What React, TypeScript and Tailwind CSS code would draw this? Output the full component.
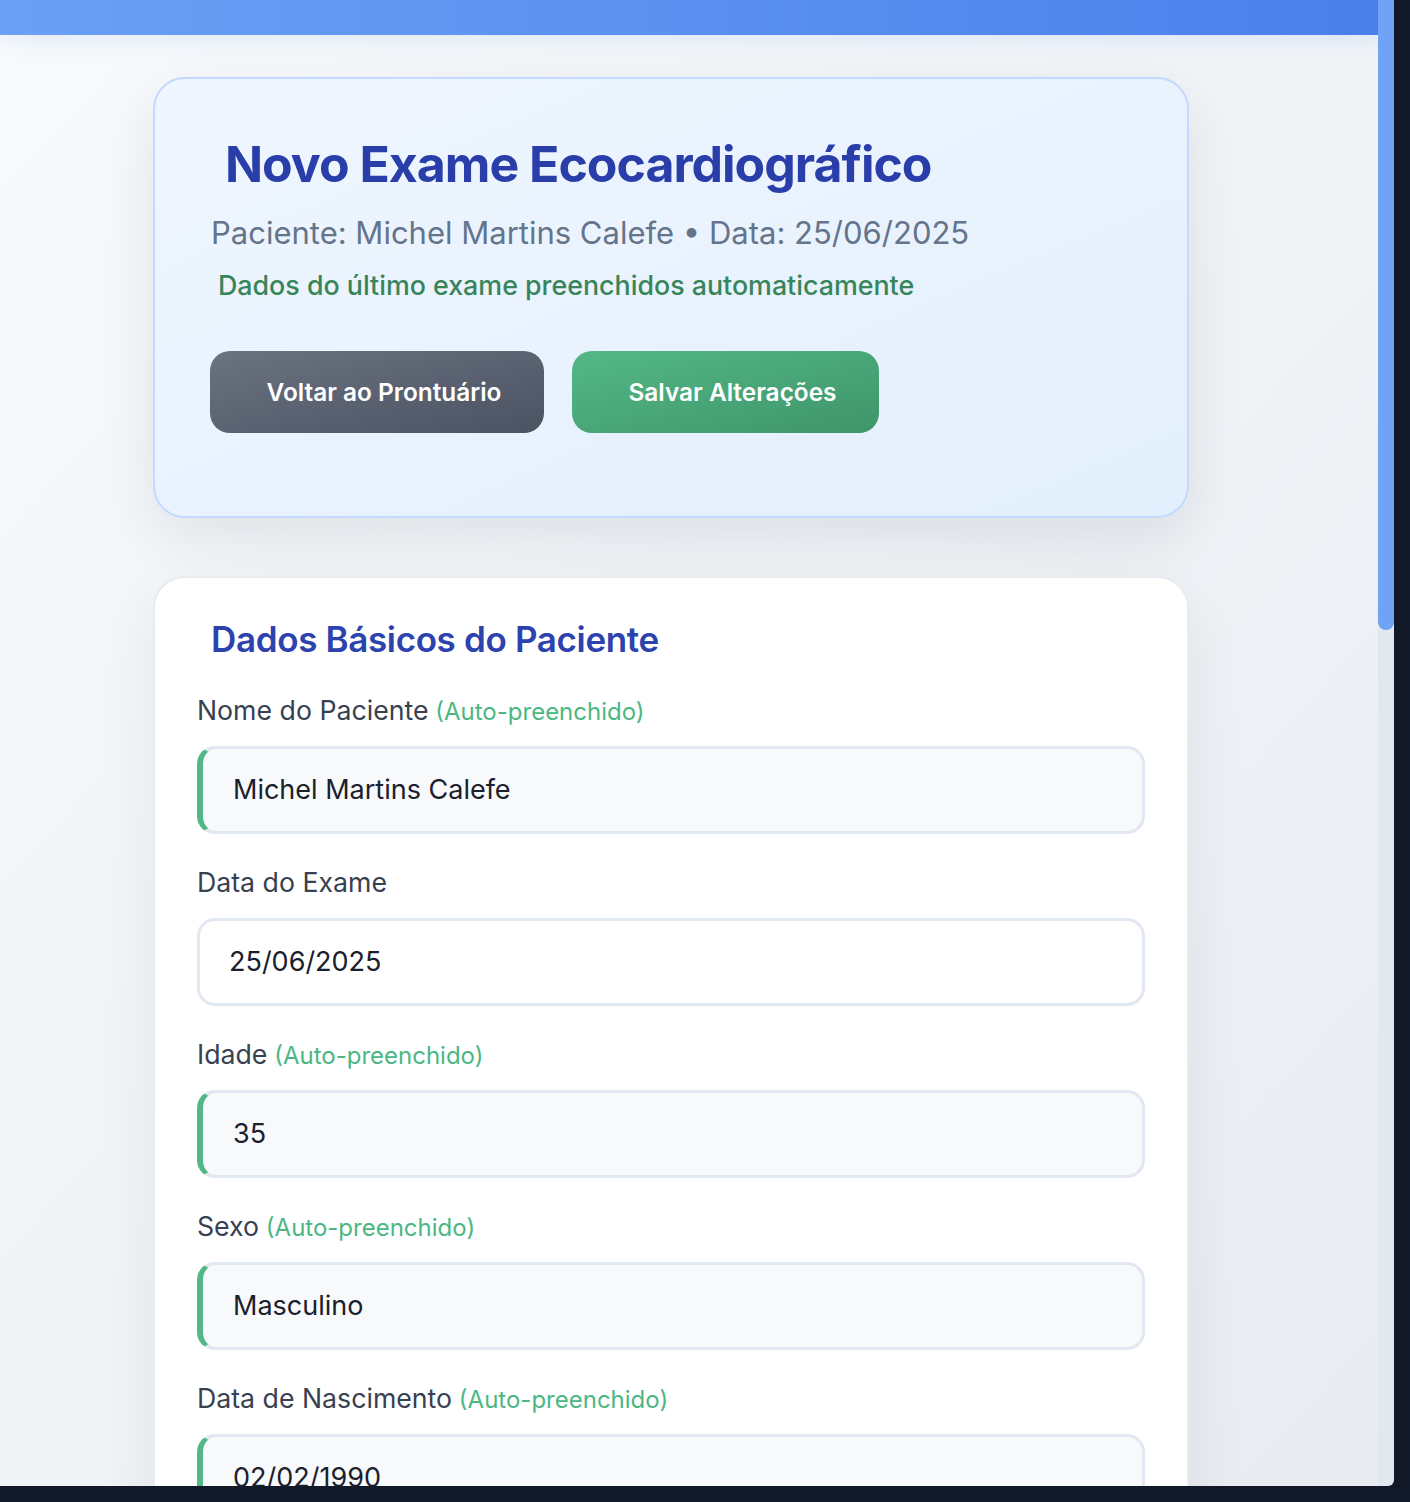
const fields = [
  { label: 'Nome do Paciente', value: 'Michel Martins Calefe', auto: true },
  { label: 'Data do Exame', value: '25/06/2025', auto: false },
  { label: 'Idade', value: '35', auto: true },
  { label: 'Sexo', value: 'Masculino', auto: true },
  { label: 'Data de Nascimento', value: '02/02/1990', auto: true },
  { label: 'Peso (kg)', value: '78', auto: true },
];

function Field({ label, value, auto }: { label: string; value: string; auto: boolean }) {
  return (
    <div className="flex flex-col">
      <label className="block h-[30px] text-[26.7px] leading-[30px] text-[#374151]">
        {label}
        {auto && <span className="text-[24px] leading-[30px] text-[#4cb782]"> (Auto-preenchido)</span>}
      </label>
      <div
        className={
          auto
            ? 'mt-[21px] h-[88px] flex items-center rounded-[18px] border-[3px] border-l-[6px] border-[#e2e8f0] border-l-[#53b886] bg-[#f7f9fb] pl-[30px] text-[27px] text-[#1a202c]'
            : 'mt-[21px] h-[88px] flex items-center rounded-[18px] border-[3px] border-[#e2e8f0] bg-white pl-[29px] text-[27px] text-[#1a202c]'
        }
      >
        {value}
      </div>
    </div>
  );
}

export default function App() {
  return (
    <div className="h-[1502px] w-[1410px] bg-[#111827] overflow-hidden" style={{ fontFamily: 'Inter, "Noto Sans", sans-serif' }}>
      <div className="flex h-[1486px] w-[1394px] overflow-hidden rounded-br-[6px]">
        <div className="flex-1 flex flex-col overflow-hidden bg-linear-to-br from-[#f8fafc] to-[#e8ecf1]">
          <div className="h-[35px] shrink-0 bg-linear-to-r from-[#6ba0f4] to-[#4a80eb] shadow-[0_4px_24px_rgba(59,130,246,0.12)]" />

          <div className="ml-[153px] w-[1036px] mt-[42px] flex flex-col">
            <div className="rounded-[32px] border-2 border-[#c3dafe] bg-linear-to-br from-[#eff6ff] to-[#e3effc] shadow-[0_20px_60px_rgba(15,23,42,0.09)] pl-[56px] pt-[55px] pb-[83px]">
              <h1 className="ml-[14px] text-[50px] leading-[61px] font-bold tracking-[-0.02em] text-[#2a3eaa]">
                Novo Exame Ecocardiográfico
              </h1>
              <p className="mt-[20px] text-[31px] leading-[36px] text-[#64748b]">
                Paciente: Michel Martins Calefe • Data: 25/06/2025
              </p>
              <p className="ml-[7px] mt-[18px] text-[26.8px] leading-[33px] font-medium text-[#38855a]">
                Dados do último exame preenchidos automaticamente
              </p>
              <div className="mt-[49px] -ml-px flex gap-[28px]">
                <button className="h-[82px] w-[334px] rounded-[20px] bg-linear-to-br from-[#6b7280] to-[#4b5262] pl-[14px] text-[24.4px] font-semibold text-white">
                  Voltar ao Prontuário
                </button>
                <button className="h-[82px] w-[307px] rounded-[20px] bg-linear-to-br from-[#53b886] to-[#3f956a] pl-[14px] text-[24.4px] font-semibold text-white">
                  Salvar Alterações
                </button>
              </div>
            </div>

            <div className="mt-[58px] rounded-[32px] border-2 border-[#e8ebf0] bg-white shadow-[0_20px_60px_rgba(15,23,42,0.07)] px-[42px] pt-[40px] pb-[40px]">
              <h2 className="ml-[14px] text-[35px] leading-[43px] font-semibold tracking-[-0.01em] text-[#2c42ad]">
                Dados Básicos do Paciente
              </h2>
              <div className="mt-[34px] flex flex-col gap-[33px]">
                {fields.map((f) => (
                  <Field key={f.label} {...f} />
                ))}
              </div>
            </div>
          </div>
        </div>

        <div className="w-[16px] shrink-0 bg-[#e2e8f0] flex flex-col">
          <div className="h-[630px] rounded-b-[8px] bg-[#70a2f5]" />
        </div>
      </div>
    </div>
  );
}
